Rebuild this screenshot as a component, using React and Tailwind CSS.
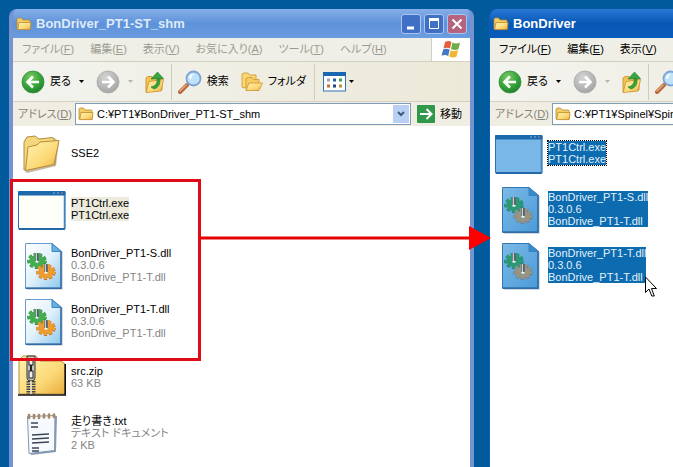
import React from 'react'

const leftFiles = [
  { icon: 'folder', lines: ['SSE2'] },
  { icon: 'exe', lines: ['PT1Ctrl.exe', 'PT1Ctrl.exe'], state: 'inactive' },
  { icon: 'dll', lines: ['BonDriver_PT1-S.dll', '0.3.0.6', 'BonDrive_PT1-T.dll'] },
  { icon: 'dll', lines: ['BonDriver_PT1-T.dll', '0.3.0.6', 'BonDrive_PT1-T.dll'] },
  { icon: 'zip', lines: ['src.zip', '63 KB'] },
  { icon: 'txt', lines: ['走り書き.txt', 'テキスト ドキュメント', '2 KB'] },
]

const rightFiles = [
  { icon: 'exe', lines: ['PT1Ctrl.exe', 'PT1Ctrl.exe'], state: 'focused' },
  { icon: 'dll', lines: ['BonDriver_PT1-S.dll', '0.3.0.6', 'BonDrive_PT1-T.dll'], state: 'selected' },
  { icon: 'dll', lines: ['BonDriver_PT1-T.dll', '0.3.0.6', 'BonDrive_PT1-T.dll'], state: 'selected' },
]

const menus = [
  ['ファイル', 'F'],
  ['編集', 'E'],
  ['表示', 'V'],
  ['お気に入り', 'A'],
  ['ツール', 'T'],
  ['ヘルプ', 'H'],
]

function Gradients() {
  return (
    <svg className="absolute h-0 w-0" aria-hidden="true">
      <defs>
        <linearGradient id="folderFill" x1="0" y1="0" x2="1" y2="1">
          <stop offset="0" stopColor="#fff3b0" />
          <stop offset="0.6" stopColor="#fbd977" />
          <stop offset="1" stopColor="#e9ab3c" />
        </linearGradient>
        <radialGradient id="greenBall" cx="0.4" cy="0.3" r="0.75">
          <stop offset="0" stopColor="#7ccb62" />
          <stop offset="0.6" stopColor="#35a23a" />
          <stop offset="1" stopColor="#1d7f2c" />
        </radialGradient>
        <radialGradient id="greyBall" cx="0.4" cy="0.3" r="0.75">
          <stop offset="0" stopColor="#d4d4d4" />
          <stop offset="1" stopColor="#a3a3a3" />
        </radialGradient>
        <linearGradient id="pageFill" x1="0" y1="0" x2="1" y2="1">
          <stop offset="0" stopColor="#ffffff" />
          <stop offset="0.5" stopColor="#e2f1fb" />
          <stop offset="1" stopColor="#8ec6ec" />
        </linearGradient>
        <linearGradient id="pageSelected" x1="0" y1="0" x2="1" y2="1">
          <stop offset="0" stopColor="#7db9e6" />
          <stop offset="1" stopColor="#4a9bd8" />
        </linearGradient>
      </defs>
    </svg>
  )
}

function SmallFolder() {
  return (
    <svg width="16" height="14" viewBox="0 0 16 14" className="shrink-0" aria-hidden="true">
      <path d="M1 12V2.5Q1 1 2.5 1H5.5L7 3H13Q14 3 14 4V12Z" fill="#f3cc64" stroke="#b98a2b" strokeWidth="0.8" />
      <path d="M3 5.5H15L14.2 12.6H1.6Z" fill="url(#folderFill)" stroke="#c08a28" strokeWidth="0.8" />
    </svg>
  )
}

function BallIcon({ forward }) {
  return (
    <svg width="24" height="24" viewBox="0 0 24 24" className="shrink-0" aria-hidden="true">
      <circle cx="12" cy="12" r="11" fill={forward ? 'url(#greyBall)' : 'url(#greenBall)'} stroke={forward ? '#a9a9a9' : '#3b8f3f'} strokeWidth="0.8" />
      <path
        d={forward ? 'M6 12H17M12 6.5L17.5 12L12 17.5' : 'M18 12H7M12 6.5L6.5 12L12 17.5'}
        fill="none"
        stroke="#fff"
        strokeWidth="2.6"
      />
    </svg>
  )
}

function UpFolderIcon() {
  return (
    <svg width="20" height="24" viewBox="0 0 20 24" className="shrink-0" aria-hidden="true">
      <path d="M1 22V8L3 6.5H7L8 8.5H17V20Z" fill="#f1c453" stroke="#c9922b" strokeWidth="0.9" />
      <path d="M4 11.5L18.5 9.5L16 21L1.2 22.5Z" fill="url(#folderFill)" stroke="#cf9a35" strokeWidth="0.9" />
      <path d="M6 17Q13 16 12 8.5H15Q16 17 9 19Z" fill="#37a13b" stroke="#1f7d2c" strokeWidth="0.6" />
      <path d="M6 9L12.5 2L18.5 8.5Z" fill="#3aa53f" stroke="#1f7d2c" strokeWidth="0.6" />
    </svg>
  )
}

function SearchIcon() {
  return (
    <svg width="24" height="24" viewBox="0 0 24 24" className="shrink-0" aria-hidden="true">
      <path d="M2 22L9 15" stroke="#b7683e" strokeWidth="4" strokeLinecap="round" />
      <path d="M2 21L8 15" stroke="#e8a67c" strokeWidth="1.4" strokeLinecap="round" />
      <circle cx="15.5" cy="8.5" r="7" fill="#bfe2fa" stroke="#7ba4d6" strokeWidth="1.8" />
      <path d="M11 8Q11.5 4 16 4Q13 6 13 9.5Z" fill="#fff" />
    </svg>
  )
}

function FoldersIcon() {
  return (
    <svg width="22" height="20" viewBox="0 0 22 20" className="shrink-0" aria-hidden="true">
      <path d="M1 15V2L3 1H7L8.5 3H15V12L2 16Z" fill="#f9d774" stroke="#d29a35" strokeWidth="0.9" />
      <path d="M5 18V6.5L7 5.5H11L12.5 7.5H18V17Z" fill="#f7cc5e" stroke="#d29a35" strokeWidth="0.9" />
      <path d="M8 11H21.5L18 18.5H5Z" fill="url(#folderFill)" stroke="#d29a35" strokeWidth="0.9" />
    </svg>
  )
}

function ViewsIcon() {
  return (
    <svg width="24" height="20" viewBox="0 0 24 20" className="shrink-0" aria-hidden="true">
      <rect x="0.5" y="0.5" width="22" height="18.5" fill="#fff" stroke="#2f72b8" />
      <rect width="23" height="4" fill="#1b66b0" />
      <rect x="4" y="6.5" width="3" height="3" fill="#9aa2c6" />
      <rect x="10" y="6.5" width="3" height="3" fill="#2a5fa6" />
      <rect x="16" y="6.5" width="3" height="3" fill="#3c9d55" />
      <rect x="4" y="12.5" width="3" height="3" fill="#c4713e" />
      <rect x="10" y="12.5" width="3" height="3" fill="#1c4787" />
      <rect x="16" y="12.5" width="3" height="3" fill="#b98f3b" />
    </svg>
  )
}

function Caret({ className = 'fill-black' }) {
  return (
    <svg width="5" height="3" viewBox="0 0 5 3" className={`shrink-0 ${className}`} aria-hidden="true">
      <path d="M0 0H5L2.5 3Z" />
    </svg>
  )
}

function WindowsFlag() {
  return (
    <svg width="20" height="19" viewBox="0 0 20 19" aria-hidden="true">
      <path d="M4 2Q7.5 0 10.5 2L9 8.5Q6 7 2.5 8.5Z" fill="#e2603a" />
      <path d="M11.5 2.5Q15 4.5 19 2.5L17.5 9Q14 11 10 9Z" fill="#6cae45" />
      <path d="M2.2 9.5Q5.5 8 8.7 9.7L7.2 16Q4 14.2 0.5 15.8Z" fill="#4478c4" />
      <path d="M9.7 10.2Q13.5 12 17.2 10L15.5 16.5Q12 18.5 8.2 16.5Z" fill="#f2b631" />
    </svg>
  )
}

function FolderIcon() {
  return (
    <svg width="48" height="48" viewBox="0 0 48 48" aria-hidden="true">
      <path d="M7 41L6 12L8 8L16 6L21 10L36 8L41 11L38 36L9 43Z" fill="#8a7440" opacity="0.5" />
      <path d="M6 40V12L9 7L17 6L21 9L35 7.5L37 11V34Z" fill="#f6d67c" stroke="#b28b3d" />
      <path d="M10 17L19 15L22 12L41 10.5L36 34.5L7.5 40.5Z" fill="url(#folderFill)" stroke="#b98d38" />
    </svg>
  )
}

function ExeIcon({ selected }) {
  return (
    <svg width="48" height="48" viewBox="0 0 48 48" aria-hidden="true">
      <rect x="0.5" y="5.5" width="46.5" height="38" rx="1" fill={selected ? '#78b7e8' : '#fffffa'} stroke="#2a72b2" />
      <rect x="0" y="5" width="47.5" height="4.5" rx="1" fill="#1b68aa" />
      <path d="M1 43H47" stroke="#2369a8" strokeWidth="2" />
      <path d="M46.5 9V43" stroke="#3f82bd" strokeWidth="1.5" />
      <path d="M35 7H37M39 7H41" stroke="#7fb5df" />
      <path d="M43 7H45" stroke="#d17a6b" />
    </svg>
  )
}

function Gear({ cx, cy, fill, stroke }) {
  return (
    <g transform={`translate(${cx} ${cy})`}>
      <ellipse rx="8" ry="6.2" fill="none" stroke={stroke} strokeWidth="3.6" strokeDasharray="3.1 1.9" />
      <ellipse rx="7.5" ry="5.8" fill={fill} stroke={stroke} strokeWidth="0.5" />
      <ellipse cy="-0.4" rx="8" ry="6.2" fill="none" stroke={fill} strokeWidth="3" strokeDasharray="2.8 2.2" />
      <path d="M0 0.5V-8" stroke="#56616b" strokeWidth="3.6" />
      <path d="M-0.6 0.5V-8" stroke="#c8d0d6" strokeWidth="1.2" />
      <ellipse cy="0.8" rx="1.8" ry="1" fill="#eef5f0" />
    </g>
  )
}

function DllIcon({ selected }) {
  const edge = selected ? '#2f76b4' : '#6b9ccc'
  return (
    <svg width="48" height="48" viewBox="0 0 48 48" aria-hidden="true">
      <path d="M9 3H36L45 10V48H9Z" fill="#9aa6b2" opacity="0.4" />
      <path d="M7.5 1.5H34L43 9V46H7.5Z" fill={selected ? 'url(#pageSelected)' : 'url(#pageFill)'} stroke={edge} />
      <path d="M7.5 46.2H43V9" fill="none" stroke="#2f6ca6" strokeWidth="1.5" />
      <path d="M34 1.5V9.5H43Z" fill={selected ? '#388bcb' : '#64b2e4'} stroke="#3b83bd" />
      <Gear cx={19} cy={19} fill={selected ? '#2b9a74' : '#43ae50'} stroke={selected ? '#217b74' : '#2a853a'} />
      <Gear cx={28} cy={30} fill={selected ? '#969585' : '#f09c30'} stroke={selected ? '#6c7883' : '#bd701c'} />
    </svg>
  )
}

function ZipIcon() {
  return (
    <svg width="48" height="48" viewBox="0 0 48 48" aria-hidden="true">
      <path d="M1 40V6L5 2H18L22 7H43L47 10V40Z" fill="url(#folderFill)" stroke="#b98d38" />
      <path d="M0 41H47.2V10" fill="none" stroke="#111" strokeWidth="1.6" />
      <path d="M9 2H17V24Q17 27 13 27Q9 27 9 24Z" fill="#c5c5be" stroke="#333" />
      <rect x="11" y="5" width="4" height="6" fill="#f1f1eb" stroke="#222" />
      <rect x="11" y="17" width="4" height="7" fill="#eee" stroke="#222" />
      <path d="M13 11V17" stroke="#222" strokeWidth="2" />
      <path d="M10.5 27V40M15.5 27V40" stroke="#444" strokeWidth="4" strokeDasharray="1.5 1" />
      <path d="M13 27V40" stroke="#e5e5df" strokeWidth="1.5" />
    </svg>
  )
}

function TxtIcon() {
  return (
    <svg width="48" height="48" viewBox="0 0 48 48" aria-hidden="true">
      <path d="M11 7L39 6L38 42L13 45Z" fill="#8d9aac" />
      <path d="M9.5 6.5L37 5.5L36.500 40.5L11 43.5Z" fill="#f7fafd" stroke="#7b98bb" />
      <path d="M11 5V8M16 5V8M21 5V8M26 4.5V7.5M31 4.5V7.5M36 4.5V7" stroke="#aa8760" strokeWidth="2.6" strokeLinecap="round" />
      <path d="M13 13H20M13 17H20M14 25L31 24M14 29L31 28M14 33L31 32M14 38H21M14 41H21" stroke="#3c4654" strokeWidth="1.3" />
    </svg>
  )
}

function FileIcon({ type, selected }) {
  if (type === 'folder') return <FolderIcon />
  if (type === 'exe') return <ExeIcon selected={selected} />
  if (type === 'dll') return <DllIcon selected={selected} />
  if (type === 'zip') return <ZipIcon />
  return <TxtIcon />
}

const labelStyles = {
  inactive: 'bg-[#ecebdd]',
  selected: 'bg-[#0d6bb0] text-[#e3f1fb]',
  focused: 'bg-[#0d6bb0] text-[#e3f1fb] outline-1 outline-dotted outline-black',
}

function FileItem({ icon, lines, state }) {
  const selected = state === 'selected' || state === 'focused'
  return (
    <li className="flex h-14 items-center gap-[5px]">
      <div className="w-12 shrink-0">
        <FileIcon type={icon} selected={selected} />
      </div>
      <div className="pb-[2px]">
        <div className={`text-[11px] leading-3 whitespace-nowrap ${labelStyles[state] || ''}`}>
          {lines.map((line, i) => (
            <p key={i} className={i > 0 && !state ? 'text-[#858585]' : ''}>{line}</p>
          ))}
        </div>
      </div>
    </li>
  )
}

function CaptionButtons({ active }) {
  const blue = active ? 'bg-[#2c6fd6]' : 'bg-[#3f70c6]'
  const base = 'flex size-5 items-center justify-center rounded-[3px] border border-[#a9c6f2]'
  return (
    <div className="flex gap-[3px]">
      <button aria-label="最小化" className={`${base} ${blue}`}>
        <svg width="14" height="14" viewBox="0 0 14 14"><path d="M3 11H10" stroke="#fff" strokeWidth="3" /></svg>
      </button>
      <button aria-label="最大化" className={`${base} ${blue}`}>
        <svg width="14" height="14" viewBox="0 0 14 14"><path d="M2.5 3V11.5H11.5V3" fill="none" stroke="#fff" /><path d="M2 2.5H12" stroke="#fff" strokeWidth="3" /></svg>
      </button>
      <button aria-label="閉じる" className={`${base} bg-[#b5637f]`}>
        <svg width="14" height="14" viewBox="0 0 14 14"><path d="M2.5 2.5L11.5 11.5M11.5 2.5L2.5 11.5" stroke="#fff" strokeWidth="2" /></svg>
      </button>
    </div>
  )
}

function ExplorerWindow({ id, title, path, files, active, className }) {
  const frame = active
    ? 'border-[#0b5cb5] border-l bg-[#0b5cb5]'
    : 'border-[#7892d0] border-x-4 bg-[#6a99df]'
  const titleBar = active
    ? 'bg-linear-to-b from-[#2878d4] via-[#0757b6] to-[#0a5cbc]'
    : 'bg-linear-to-b from-[#86aee8] via-[#5d92da] to-[#6a9ce0]'
  return (
    <section className={`absolute top-[9px] bottom-0 flex flex-col overflow-hidden rounded-t-lg ${frame} ${className}`}>
      <header className={`flex h-[29px] shrink-0 items-center gap-1 px-[3px] ${titleBar}`}>
        <SmallFolder />
        <h2 className={`flex-1 text-[13px] leading-4 font-bold whitespace-nowrap ${active ? 'text-white' : 'text-[#dfeafa]'}`}>{title}</h2>
        <CaptionButtons active={active} />
      </header>

      <nav className="flex h-6 shrink-0 items-stretch border-b border-[#d3d0c2] bg-[#f0efe7]">
        <div className={`flex flex-1 items-center gap-4 pl-[9px] text-[11px] whitespace-nowrap ${active ? 'text-black' : 'text-[#9c9b92]'}`}>
          {menus.map(([label, key]) => (
            <button key={key}>{label}(<u>{key}</u>)</button>
          ))}
        </div>
        <div className="flex w-[39px] items-center justify-center border-l border-[#d3d0c2] bg-white">
          <WindowsFlag />
        </div>
      </nav>

      <div className="flex h-10 shrink-0 items-center border-b border-[#d3d0c2] bg-linear-to-r from-[#f3f3ef] to-[#ece9d8] pl-2 text-[11px] whitespace-nowrap">
        <button className="flex items-center gap-[5px]"><BallIcon />戻る</button>
        <button aria-label="戻る履歴" className="ml-2"><Caret /></button>
        <button aria-label="進む" className="ml-3 flex items-center gap-2"><BallIcon forward /><Caret className="fill-[#b5b4aa]" /></button>
        <button aria-label="上へ" className="ml-3"><UpFolderIcon /></button>
        <div className="mx-[6px] h-9 w-px bg-[#cfccbc]" />
        <button className="flex items-center gap-[5px]"><SearchIcon />検索</button>
        <button className="ml-3 flex items-center gap-[5px]"><FoldersIcon />フォルダ</button>
        <div className="mx-2 h-9 w-px bg-[#cfccbc]" />
        <button aria-label="表示" className="flex items-center gap-[2px]"><ViewsIcon /><Caret /></button>
      </div>

      <div className="flex h-6 shrink-0 items-center bg-[#f0eee3] pl-[5px] text-[11px]">
        <label htmlFor={id} className="w-[57px] shrink-0 whitespace-nowrap text-[#85847c]">アドレス(<u>D</u>)</label>
        <div className="flex h-[22px] flex-1 items-center gap-[3px] border border-[#7f9db9] bg-white pl-[2px]">
          <SmallFolder />
          <input id={id} defaultValue={path} className="min-w-0 flex-1 bg-transparent outline-none" />
          <button aria-label="アドレス一覧" className="mr-px flex h-[18px] w-4 items-center justify-center bg-[#b9d0f2]">
            <svg width="8" height="6" viewBox="0 0 8 6"><path d="M1 1L4 4L7 1" fill="none" stroke="#3c587f" strokeWidth="2" /></svg>
          </button>
        </div>
        <button className="flex items-center gap-[5px] pr-2 pl-[6px] whitespace-nowrap">
          <svg width="18" height="18" viewBox="0 0 18 18" aria-hidden="true">
            <rect width="18" height="18" rx="1" fill="#31974a" />
            <path d="M3 9H14M9.5 4L14.5 9L9.5 14" fill="none" stroke="#fff" strokeWidth="2" />
          </svg>
          移動
        </button>
      </div>

      <ul className="flex-1 bg-white pl-[5px]">
        {files.map((file, i) => (
          <FileItem key={i} {...file} />
        ))}
      </ul>
    </section>
  )
}

export default function App() {
  return (
    <main className="relative h-screen overflow-hidden bg-[#005a9c] font-['Liberation_Sans','Noto_Sans_CJK_JP',sans-serif] text-black [font-feature-settings:'palt']">
      <Gradients />
      <ExplorerWindow id="address-left" title="BonDriver_PT1-ST_shm" path="C:¥PT1¥BonDriver_PT1-ST_shm" files={leftFiles} className="left-[9px] w-[465px]" />
      <ExplorerWindow id="address-right" title="BonDriver" path="C:¥PT1¥Spinel¥Spinel" files={rightFiles} active className="left-[489px] w-[465px]" />

      {/* copy marker: box round the three files, arrow to the other window */}
      <div className="pointer-events-none absolute top-[179px] left-[10px] h-[182px] w-[191px] border-3 border-[#de0a17]" />
      <svg className="pointer-events-none absolute top-[226px] left-[200px]" width="292" height="24" viewBox="0 0 292 24" aria-hidden="true">
        <path d="M0 12H271" stroke="#e60000" strokeWidth="3" />
        <path d="M269 0L291 12L269 24Z" fill="#ff0000" />
      </svg>

      {/* mouse pointer */}
      <svg className="pointer-events-none absolute top-[276px] left-[645px]" width="13" height="21" viewBox="0 0 13 21" aria-hidden="true">
        <path d="M0.5 1V16.5L4 13L6.8 20H9.3L6.5 12.5H11.5Z" fill="#fff" stroke="#000" />
      </svg>
    </main>
  )
}
